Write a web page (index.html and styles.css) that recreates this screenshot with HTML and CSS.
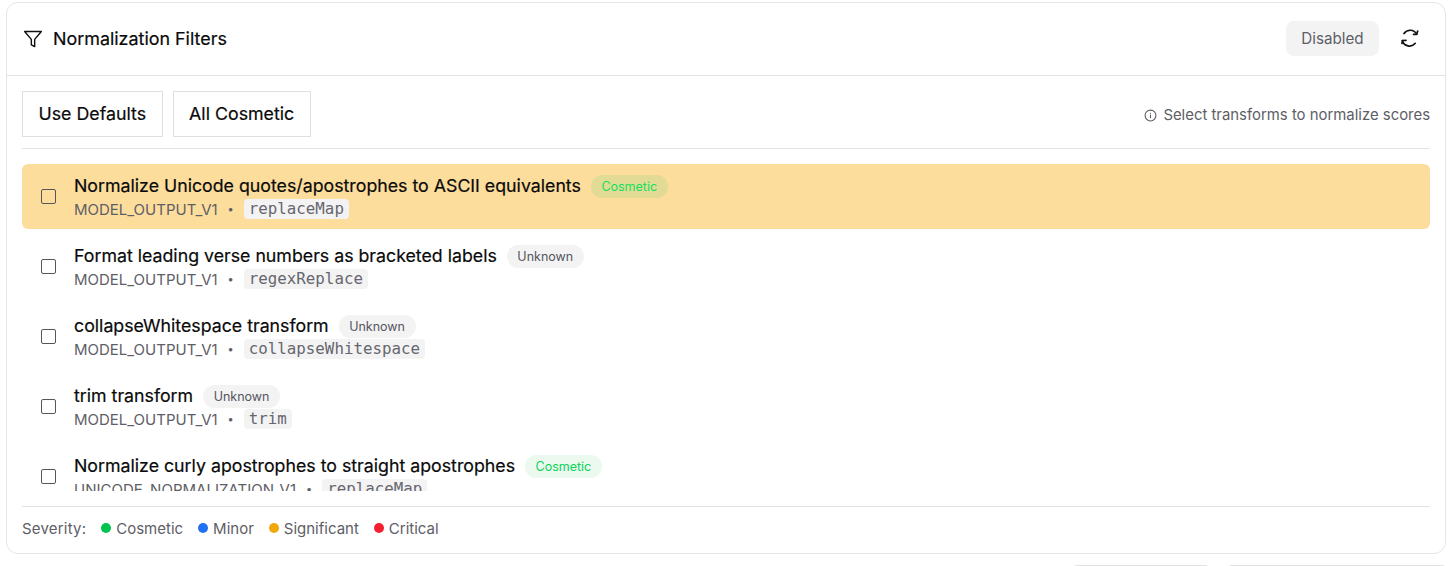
FILE: index.html
```html
<!DOCTYPE html>
<html lang="en">
  <head>
    <meta charset="UTF-8" />
    <title>Normalization Filters</title>
    <link rel="stylesheet" href="styles.css">
  </head>
  <body>
    <section class="card">
      <header class="card-head">
        <div class="title">
          <svg class="filter-icon" viewBox="0 0 24 24" width="20" height="20"><path d="M22 3H2l8 9.46V19l4 2v-8.54L22 3z"/></svg>
          <h1>Normalization Filters</h1>
        </div>
        <div class="head-actions">
          <button class="disabled-btn">Disabled</button>
          <svg class="refresh-icon" viewBox="10 8 20 22" width="20" height="22"><path d="M14 14.5A7.5 7.5 0 0 1 26.7 15"/><path d="M27.7 12l-1 3.3h-3.2"/><path d="M12.3 21.5A7.5 7.5 0 0 0 25.3 24.3"/><path d="M16 21.3l-3.5.2-.5 3"/></svg>
        </div>
      </header>
      <div class="body">
        <div class="toolbar">
          <div class="presets">
            <button class="preset">Use Defaults</button>
            <button class="preset">All Cosmetic</button>
          </div>
          <p class="hint">
            <svg viewBox="0 0 24 24" width="13" height="13"><circle cx="12" cy="12" r="10"/><path d="M12 16v-5"/><path d="M12 8h.01"/></svg>
            Select transforms to normalize scores
          </p>
        </div>
        <ul class="list">
          <li class="row selected">
            <span class="check"></span>
            <div>
              <div class="name">Normalize Unicode quotes/apostrophes to ASCII equivalents <span class="tag cosmetic">Cosmetic</span></div>
              <div class="meta">MODEL_OUTPUT_V1 <i>•</i> <code>replaceMap</code></div>
            </div>
          </li>
          <li class="row">
            <span class="check"></span>
            <div>
              <div class="name">Format leading verse numbers as bracketed labels <span class="tag">Unknown</span></div>
              <div class="meta">MODEL_OUTPUT_V1 <i>•</i> <code>regexReplace</code></div>
            </div>
          </li>
          <li class="row">
            <span class="check"></span>
            <div>
              <div class="name">collapseWhitespace transform <span class="tag">Unknown</span></div>
              <div class="meta">MODEL_OUTPUT_V1 <i>•</i> <code>collapseWhitespace</code></div>
            </div>
          </li>
          <li class="row">
            <span class="check"></span>
            <div>
              <div class="name">trim transform <span class="tag">Unknown</span></div>
              <div class="meta">MODEL_OUTPUT_V1 <i>•</i> <code>trim</code></div>
            </div>
          </li>
          <li class="row">
            <span class="check"></span>
            <div>
              <div class="name">Normalize curly apostrophes to straight apostrophes <span class="tag cosmetic">Cosmetic</span></div>
              <div class="meta">UNICODE_NORMALIZATION_V1 <i>•</i> <code>replaceMap</code></div>
            </div>
          </li>
        </ul>
        <footer class="legend">
          <span class="legend-label">Severity:</span>
          <span class="item"><b class="dot green"></b>Cosmetic</span>
          <span class="item"><b class="dot blue"></b>Minor</span>
          <span class="item"><b class="dot amber"></b>Significant</span>
          <span class="item"><b class="dot red"></b>Critical</span>
        </footer>
      </div>
    </section>
    <div class="below">
      <span class="stub first"></span>
      <span class="stub second"></span>
    </div>
  </body>
</html>
```

FILE: styles.css
```css
html,
body {
  height: 566px;
  overflow: hidden;
}
body {
  font-family: Inter, "Noto Sans", sans-serif;
  background: #fff;
  color: #0a0a0a;
  margin: 0;
  padding: 2px 10px 0 6px;
}
.card {
  height: 552px;
  box-sizing: border-box;
  border: 1px solid #e5e5e7;
  border-radius: 12px;
  display: flex;
  flex-direction: column;
}
.card-head {
  height: 73px;
  flex: none;
  box-sizing: border-box;
  border-bottom: 1px solid #e2e2e5;
  display: flex;
  justify-content: space-between;
  align-items: center;
  padding: 0 25px 2px 16px;
}
.title {
  display: flex;
  align-items: center;
  gap: 10px;
}
.filter-icon,
.refresh-icon {
  fill: none;
  stroke: #111;
  stroke-width: 1.7;
  stroke-linecap: round;
  stroke-linejoin: round;
}
.filter-icon {
  margin-top: 2px;
}
h1 {
  margin: 0;
  font-size: 17.9px;
  font-weight: 400;
  -webkit-text-stroke: 0.2px #0a0a0a;
}
.head-actions {
  display: flex;
  align-items: center;
  gap: 21px;
}
button {
  font-family: inherit;
}
.disabled-btn {
  width: 93px;
  height: 35px;
  padding: 0;
  border: none;
  border-radius: 8px;
  background: #f3f3f4;
  color: #5e5e66;
  font-size: 15.2px;
}
.body {
  flex: 1;
  min-height: 0;
  display: flex;
  flex-direction: column;
  padding: 15px 15px 0;
}
.toolbar {
  height: 58px;
  flex: none;
  box-sizing: border-box;
  border-bottom: 1px solid #e2e2e5;
  display: flex;
  justify-content: space-between;
  align-items: flex-start;
}
.presets {
  display: flex;
  gap: 10px;
}
.preset {
  height: 46px;
  padding: 0 15.5px 2px;
  border: 1px solid #dfdfe2;
  background: #fff;
  color: #0a0a0a;
  font-size: 17.8px;
  font-weight: 400;
  -webkit-text-stroke: 0.2px #0a0a0a;
}
.hint {
  margin: 15px 0 0;
  display: flex;
  align-items: center;
  gap: 6px;
  font-size: 14.9px;
  color: #5e5e66;
}
.hint svg {
  fill: none;
  stroke: #5e5e66;
  stroke-width: 2;
  stroke-linecap: round;
}
.list {
  list-style: none;
  margin: 15px 0 0;
  padding: 0;
  height: 327px;
  flex: none;
  overflow: hidden;
  display: flex;
  flex-direction: column;
  gap: 5px;
}
.row {
  height: 65px;
  flex: none;
  box-sizing: border-box;
  border-radius: 6px;
  display: flex;
  align-items: center;
  gap: 18.5px;
  padding: 0 18.5px;
}
.row.selected {
  background: #fddd9c;
}
.check {
  width: 15px;
  height: 15px;
  flex: none;
  box-sizing: border-box;
  border: 1px solid #55555c;
  border-radius: 2px;
}
.name {
  display: flex;
  align-items: center;
  gap: 10px;
  height: 23px;
  font-size: 17.75px;
  font-weight: 400;
  -webkit-text-stroke: 0.2px #0a0a0a;
  white-space: nowrap;
}
.tag {
  height: 23px;
  line-height: 23px;
  margin-top: 2px;
  padding: 0 10.5px;
  border-radius: 12px;
  background: #f3f3f4;
  color: #55555c;
  font-size: 12.5px;
  font-weight: 400;
  -webkit-text-stroke: 0;
}
.tag.cosmetic {
  background: #ebf9ef;
  color: #0cd45a;
}
.selected .tag.cosmetic {
  background: #e2db96;
  color: #12e05f;
}
.meta {
  display: flex;
  align-items: center;
  gap: 10px;
  height: 20px;
  margin-top: 2px;
  font-size: 15px;
  color: #5e5e66;
  white-space: nowrap;
}
.meta i {
  font-style: normal;
  font-size: 11px;
}
code {
  font-family: "DejaVu Sans Mono", monospace;
  font-size: 15.8px;
  line-height: 20px;
  padding: 0 5px;
  border-radius: 4px;
  background: #f3f3f4;
  color: #66666e;
}
.legend {
  flex: 1;
  margin-top: 15px;
  border-top: 1px solid #e2e2e5;
  display: flex;
  align-items: center;
  gap: 15px;
  padding-bottom: 4px;
  font-size: 15px;
  color: #5e5e66;
}
.legend-label {
  letter-spacing: 0.2px;
}
.item {
  display: flex;
  align-items: center;
  gap: 5px;
}
.dot {
  width: 10px;
  height: 10px;
  border-radius: 50%;
}
.green {
  background: #00c44f;
}
.blue {
  background: #2172f3;
}
.amber {
  background: #f0a80a;
}
.red {
  background: #f5202f;
}
.below {
  display: flex;
  justify-content: flex-end;
  gap: 19px;
  margin-top: 11px;
}
.stub {
  height: 4px;
  border-top: 1px solid #e2e2e5;
  border-radius: 4px 4px 0 0;
}
.stub.first {
  width: 136px;
}
.stub.second {
  width: 218px;
}
```
